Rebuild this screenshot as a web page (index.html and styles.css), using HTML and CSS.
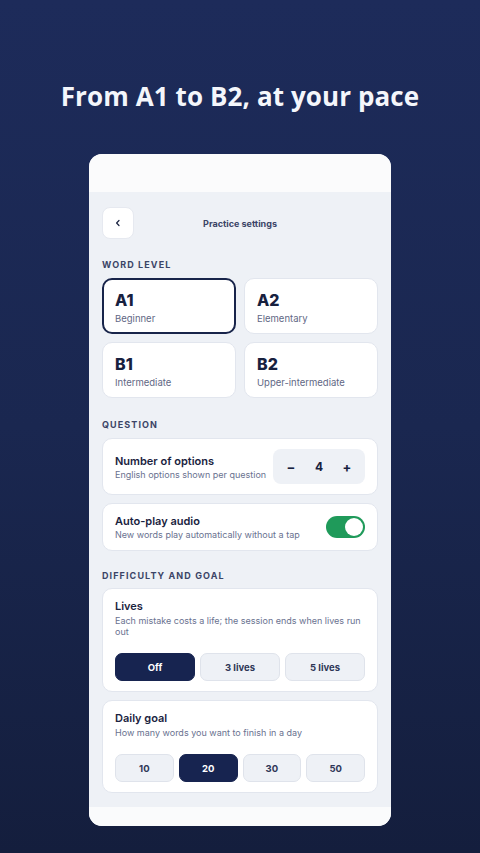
FILE: index.html
```html
<!DOCTYPE html>
<html lang="en">
<head>
<meta charset="utf-8">
<link rel="stylesheet" href="styles.css">
</head>
<body>
<div class="page">
  <h1 class="headline">From A1 to B2, at your pace</h1>
  <div class="phone">
    <div class="status"></div>
    <div class="content">
      <div class="topbar">
        <div class="back">
          <svg width="8" height="8" viewBox="0 0 8 8"><path d="M5 1.5 L2.6 4 L5 6.5" fill="none" stroke="#1a2340" stroke-width="1.2" stroke-linecap="round" stroke-linejoin="round"/></svg>
        </div>
        <div class="topbar-title">Practice settings</div>
        <div class="spacer"></div>
      </div>

      <div class="section-label first">WORD LEVEL</div>
      <div class="levels">
        <div class="level selected"><div class="lv">A1</div><div class="lv-sub">Beginner</div></div>
        <div class="level"><div class="lv">A2</div><div class="lv-sub">Elementary</div></div>
        <div class="level"><div class="lv">B1</div><div class="lv-sub">Intermediate</div></div>
        <div class="level"><div class="lv">B2</div><div class="lv-sub">Upper-intermediate</div></div>
      </div>

      <div class="section-label">QUESTION</div>
      <div class="card row-card tall">
        <div class="texts">
          <div class="c-title">Number of options</div>
          <div class="c-sub">English options shown per question</div>
        </div>
        <div class="stepper"><span class="st-btn">−</span><span class="st-val">4</span><span class="st-btn">+</span></div>
      </div>
      <div class="card row-card short">
        <div class="texts">
          <div class="c-title">Auto-play audio</div>
          <div class="c-sub">New words play automatically without a tap</div>
        </div>
        <div class="toggle"><div class="knob"></div></div>
      </div>

      <div class="section-label tight">DIFFICULTY AND GOAL</div>
      <div class="card block-card">
        <div class="c-title">Lives</div>
        <div class="c-sub wrap">Each mistake costs a life; the session ends when lives run out</div>
        <div class="choices three">
          <div class="choice active">Off</div>
          <div class="choice">3 lives</div>
          <div class="choice">5 lives</div>
        </div>
      </div>
      <div class="card block-card goal">
        <div class="c-title">Daily goal</div>
        <div class="c-sub wrap">How many words you want to finish in a day</div>
        <div class="choices four">
          <div class="choice">10</div>
          <div class="choice active">20</div>
          <div class="choice">30</div>
          <div class="choice">50</div>
        </div>
      </div>
    </div>
    <div class="footer"></div>
  </div>
</div>
</body>
</html>
```

FILE: styles.css
```css
* { box-sizing: border-box; }
html, body { margin: 0; padding: 0; }
body {
  width: 480px;
  height: 853px;
  overflow: hidden;
  background: linear-gradient(180deg, #1d2b5a 0%, #1a2750 50%, #141e3d 100%);
  font-family: Inter, "Noto Sans", sans-serif;
}
.page {
  display: flex;
  flex-direction: column;
  align-items: center;
}
.headline {
  margin: 80px 0 0;
  font-family: "Open Sans", "Noto Sans", sans-serif;
  font-weight: 700;
  font-size: 26px;
  line-height: 32px;
  color: #f4f6fb;
  letter-spacing: 0.1px;
}
.phone {
  margin-top: 42px;
  width: 302px;
  height: 672px;
  border-radius: 13px;
  background: #eef1f6;
  overflow: hidden;
  display: flex;
  flex-direction: column;
}
.status {
  height: 38px;
  background: #fbfbfc;
  flex: none;
}
.content {
  flex: 1;
  padding: 15px 13px 0 13px;
}
.footer {
  height: 19px;
  background: #fafbfc;
  flex: none;
}
.topbar {
  display: grid;
  grid-template-columns: 32px 1fr 32px;
  align-items: center;
  height: 32px;
}
.back {
  width: 32px;
  height: 32px;
  background: #fff;
  border-radius: 8px;
  border: 1px solid #e6e9f0;
  display: flex;
  align-items: center;
  justify-content: center;
}
.topbar-title {
  text-align: center;
  font-size: 9px;
  font-weight: 700;
  color: #3b4466;
}
.section-label {
  margin: 21px 0 8px;
  font-size: 9px;
  font-weight: 700;
  letter-spacing: 1.1px;
  color: #3b4466;
  line-height: 11px;
}
.section-label.first { margin-top: 20px; }
.section-label.tight { margin-top: 19px; margin-bottom: 7px; }
.levels {
  display: grid;
  grid-template-columns: 1fr 1fr;
  gap: 8px;
}
.level {
  height: 56px;
  background: #fff;
  border: 1px solid #e2e6ee;
  border-radius: 10px;
  padding: 11px 12px 0;
}
.level.selected {
  border: 2px solid #18244a;
  padding: 10px 11px 0;
}
.lv {
  font-size: 16px;
  font-weight: 800;
  color: #17213f;
  line-height: 20px;
}
.lv-sub {
  font-size: 9.5px;
  color: #5f6885;
  line-height: 12px;
  margin-top: 3px;
}
.card {
  background: #fff;
  border: 1px solid #e2e6ee;
  border-radius: 10px;
}
.row-card {
  display: flex;
  align-items: center;
  justify-content: space-between;
  padding: 0 12px;
}
.row-card.tall { height: 57px; }
.row-card.short { height: 48px; margin-top: 8px; }
.c-title {
  font-size: 11px;
  font-weight: 600;
  color: #1a2340;
  line-height: 14px;
}
.c-sub {
  font-size: 9px;
  color: #6a7290;
  line-height: 11px;
  margin-top: 1px;
}
.c-sub.wrap { margin-top: 2px; }
.stepper {
  width: 92px;
  height: 35px;
  background: #eef1f6;
  border-radius: 8px;
  display: flex;
  align-items: center;
  justify-content: space-between;
  padding: 0 8px;
  font-weight: 700;
  color: #17213f;
}
.st-btn { font-size: 13px; width: 20px; text-align: center; }
.st-val { font-size: 12px; }
.toggle {
  width: 39px;
  height: 22px;
  background: #1f9a5a;
  border-radius: 11px;
  display: flex;
  justify-content: flex-end;
  align-items: center;
  padding: 2px;
}
.knob {
  width: 18px;
  height: 18px;
  background: #fff;
  border-radius: 50%;
}
.block-card {
  padding: 10px 12px 10px;
}
.block-card.goal { margin-top: 8px; }
.choices {
  display: grid;
  gap: 5px;
  margin-top: 16px;
}
.choices.three { grid-template-columns: repeat(3, 1fr); }
.choices.four { grid-template-columns: repeat(4, 1fr); margin-top: 16px; }
.choice {
  height: 28px;
  border-radius: 7px;
  background: #eef1f6;
  border: 1px solid #dfe3eb;
  display: flex;
  align-items: center;
  justify-content: center;
  font-size: 9.5px;
  font-weight: 700;
  color: #2e3757;
}
.choice.active {
  background: #172450;
  border-color: #172450;
  color: #fff;
}
```
